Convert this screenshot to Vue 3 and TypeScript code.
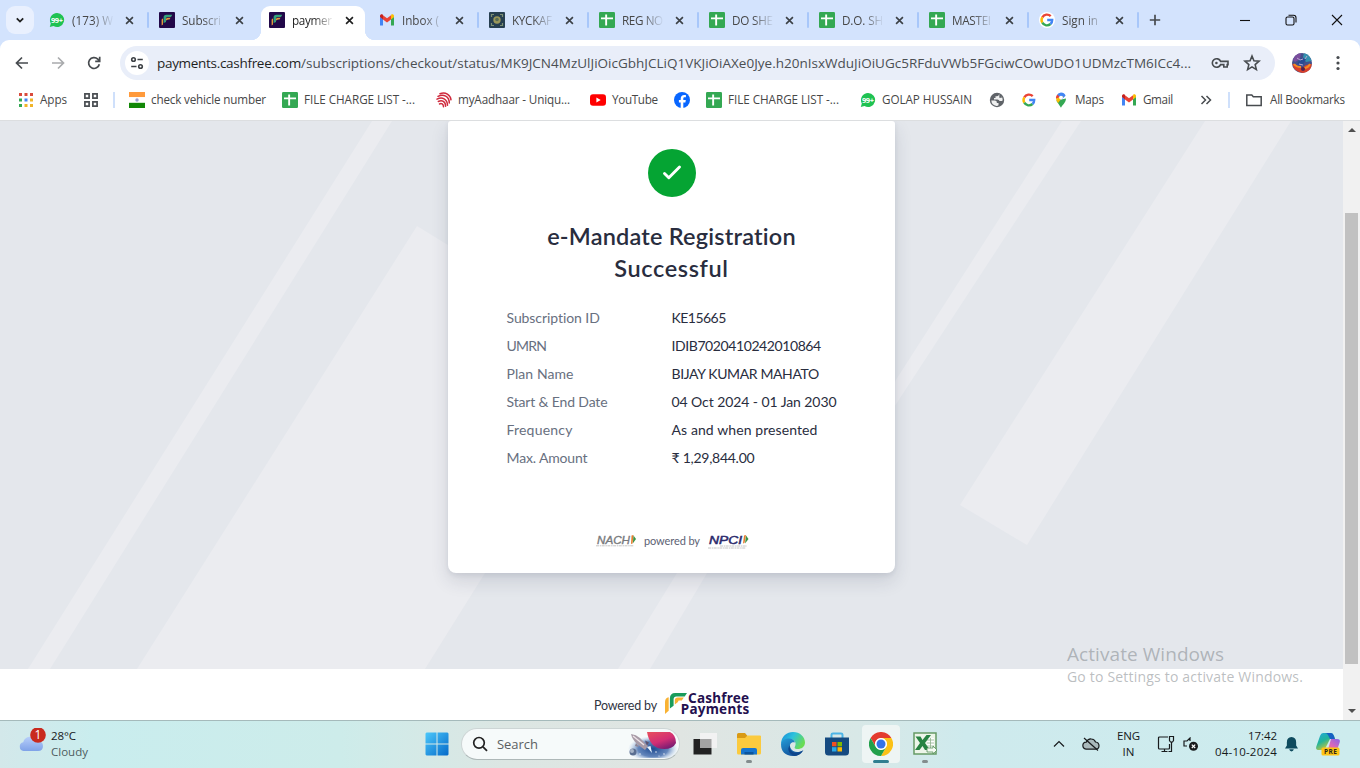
<script setup lang="ts">
import type { Directive } from 'vue'

interface Tab {
  icon: string
  title: string
  width: number
  active?: boolean
  divider?: boolean
}

interface Bookmark {
  icon: string
  label?: string
  text?: number
  box?: number
}

// Tracks a run of text so that it fills the given width in pixels.
const vFit: Directive<HTMLElement, number> = {
  mounted(el, { value }) {
    const range = document.createRange()
    range.selectNodeContents(el)
    const natural = range.getBoundingClientRect().width
    const count = (el.textContent ?? '').length
    if (count > 1) el.style.letterSpacing = `${(value - natural) / (count - 0.5)}px`
  },
}

const gmail =
  '<path fill="#4285f4" d="M1 13.500h3V7L1 4.800z"/><path fill="#34a853" d="M12 13.500h3V4.800L12 7z"/><path fill="#fbbc04" d="M12 4v3.400l3-2.300V4c0-1.500-1.700-2.200-2.700-1.400z"/><path fill="#ea4335" d="M4 7.400V3.200l4 3 4-3v4.200l-4 3z"/><path fill="#c5221f" d="M1 4v1.100l3 2.300V3.200l-.4-.6C2.700 1.900 1 2.500 1 4z"/>'
const google =
  '<path fill="none" stroke="#ea4335" stroke-width="2.400" d="M3.300 5.300A5.300 5.300 0 0 1 11.700 4.200"/><path fill="none" stroke="#fbbc05" stroke-width="2.400" d="M3.300 5.300a5.300 5.300 0 0 0 0 5.400"/><path fill="none" stroke="#34a853" stroke-width="2.400" d="M3.300 10.700a5.300 5.300 0 0 0 8.200 1.300"/><path fill="none" stroke="#4285f4" stroke-width="2.400" d="M8.200 8H13.200a5.300 5.300 0 0 1-1.700 4"/>'

const icons: Record<string, string> = {
  whatsapp:
    '<path fill="#1fc252" d="M8 1a7 7 0 1 1-3.500 13L.8 15l1-3.600A7 7 0 0 1 8 1z"/><text x="8" y="11" text-anchor="middle" font-family="Open Sans, sans-serif" font-size="7.500" font-weight="700" fill="#fff" textLength="12">99+</text>',
  cashfree:
    '<rect width="16" height="16" rx="1" fill="#220849"/><path fill="#e5983d" d="M2.600 13.500V8q0-1.200 1.400-1.600v6z"/><path fill="#35a07a" d="M4.600 11V5.500q0-2.700 2.700-2.700h6L12 5H8.500Q7 5 7 6.500V10z"/><path fill="#e5983d" d="M7 8.500V7.300q0-1.500 1.500-1.500h3l-1 1.700H9z"/>',
  gmail,
  google,
  googleTab: '<circle cx="8" cy="8" r="8" fill="#fff"/>' + google,
  kyc: '<rect width="16" height="16" rx="1" fill="#263f50"/><path fill="none" stroke="#7b8f74" stroke-width="1.200" d="M2.500 5V2.500H5M11 2.500h2.500V5M13.500 11v2.500H11M5 13.500H2.500V11"/><circle cx="8" cy="8" r="3.700" fill="#9a9759"/><circle cx="8" cy="7.500" r="1.800" fill="#566b55"/>',
  sheet:
    '<rect width="16" height="16" rx="1.200" fill="#34a853"/><path fill="#fff" d="M6.200 2.500h1.900v3h5.900v1.800H8.100V13.500H6.200V7.300H2V5.500h4.200z"/>',
  apps: '<path fill="#d94a3c" d="M1 1h3v3H1zM6.500 1h3v3h-3zM12 1h3v3h-3z"/><path fill="#34a853" d="M1 6.500h3v3H1zM1 12h3v3H1z"/><path fill="#4285f4" d="M6.500 6.500h3v3h-3z"/><path fill="#f0b429" d="M12 6.500h3v3h-3zM6.500 12h3v3h-3zM12 12h3v3h-3z"/>',
  grid: '<path fill="none" stroke="#4b4f53" stroke-width="1.700" d="M1.900 1.900h4.200v4.200H1.900zM9.900 1.900h4.200v4.200H9.900zM1.900 9.900h4.200v4.200H1.900zM9.900 9.900h4.200v4.200H9.900z"/>',
  flag: '<path fill="#ff9a3c" d="M0 0h16v5.200H0z"/><path fill="#fff" d="M0 5.200h16v5.600H0z"/><path fill="#128807" d="M0 10.800h16V16H0z"/><circle cx="8" cy="8" r="1.700" fill="#9a9fd0"/>',
  aadhaar:
    '<g fill="none" stroke="#cf2a3d" stroke-width="1.500" stroke-linecap="round"><path d="M4 1.700C9.500-.6 14.500 3 15 7.800"/><path d="M2 4.300C7.500 1.400 13.300 4.400 13.300 11"/><path d="M1 7.200c5.200-2.900 10.300-.2 10.500 6"/><path d="M2.300 9.500c3.700-2 7.400 0 7.300 4.800"/><path d="M3.500 12c2-1 3.800 0 4 2.700"/></g>',
  youtube: '<rect y="2.300" width="16" height="11.500" rx="3" fill="#f00"/><path fill="#fff" d="M6.400 5.500v5l4.300-2.500z"/>',
  facebook:
    '<circle cx="8" cy="8" r="8" fill="#0866ff"/><path fill="#fff" d="M6.700 16v-5.500H4.900V8h1.800V6.800c0-2.700 1.200-3.900 3.700-3.900.5 0 1.100.1 1.500.2v2.200h-1c-1.200 0-1.600.4-1.600 1.500V8h2.500l-.4 2.500H9.300V16z"/>',
  globe:
    '<circle cx="8" cy="8" r="7.200" fill="#5f6368"/><path fill="#fff" d="M2.300 8.500h3.500q2 0 2 1.500v1h1.700v2.300q-.8.700-2 .6-4.800-.8-5.200-5.400zM10 2.500q-.2 1.700-2 1.700H6.500v1.900H5v1.400h3.500q1.700 0 2 1.600h1.700q1.200 0 1.500-1.200-.2-4-3.700-5.400z" opacity=".9"/><path fill="#5f6368" d="M10.300 2.800h2.500v3h-2.500z"/>',
  maps: '<path fill="#34a853" d="M3.200 8.600 8 15.800c.6-2.700 5-4.800 5-9.400z"/><path fill="#4285f4" d="M8 .5a5 5 0 0 1 4.600 3.200L7.500 8.500 4 3.100A5 5 0 0 1 8 .5z"/><path fill="#ea4335" d="M4.200 2.600A5 5 0 0 0 3.200 7L7 4.900z"/><path fill="#fbbc04" d="M3.100 6.500Q3.300 9 5 10.900l5.500-6.700z"/><circle cx="8" cy="5.600" r="1.900" fill="#fff"/>',
  folder: '<path fill="none" stroke="#474b4f" stroke-width="1.500" d="M.8 3h5l1.500 1.700h7.900v8.700H.8z"/>',
}

const tabs: Tab[] = [
  { icon: 'whatsapp', title: '(173) W', width: 41, divider: true },
  { icon: 'cashfree', title: 'Subscri', width: 39 },
  { icon: 'cashfree', title: 'paymer', width: 40, active: true },
  { icon: 'gmail', title: 'Inbox (', width: 37, divider: true },
  { icon: 'kyc', title: 'KYCKAF', width: 40, divider: true },
  { icon: 'sheet', title: 'REG NO', width: 41, divider: true },
  { icon: 'sheet', title: 'DO SHE', width: 41, divider: true },
  { icon: 'sheet', title: 'D.O. SH', width: 41, divider: true },
  { icon: 'sheet', title: 'MASTEI', width: 39, divider: true },
  { icon: 'googleTab', title: 'Sign in', width: 36, divider: true },
]

const bookmarks: Bookmark[] = [
  { icon: 'flag', label: 'check vehicle number', text: 115, box: 115 },
  { icon: 'sheet', label: 'FILE CHARGE LIST -...', text: 111, box: 116 },
  { icon: 'aadhaar', label: 'myAadhaar - Uniqu...', text: 112, box: 116 },
  { icon: 'youtube', label: 'YouTube', text: 46, box: 46 },
  { icon: 'facebook' },
  { icon: 'sheet', label: 'FILE CHARGE LIST -...', text: 111, box: 116 },
  { icon: 'whatsapp', label: 'GOLAP HUSSAIN', text: 90, box: 91 },
  { icon: 'globe' },
  { icon: 'google' },
  { icon: 'maps', label: 'Maps', text: 29, box: 30 },
  { icon: 'gmail', label: 'Gmail', text: 30, box: 31 },
]

const details = [
  { label: 'Subscription ID', lw: 93.5, value: 'KE15665', vw: 54.5 },
  { label: 'UMRN', lw: 40, value: 'IDIB7020410242010864', vw: 149.5 },
  { label: 'Plan Name', lw: 67, value: 'BIJAY KUMAR MAHATO', vw: 147.5 },
  { label: 'Start & End Date', lw: 101, value: '04 Oct 2024 - 01 Jan 2030', vw: 165 },
  { label: 'Frequency', lw: 66, value: 'As and when presented', vw: 146 },
  { label: 'Max. Amount', lw: 81, value: '₹ 1,29,844.00', vw: 83 },
]
</script>

<template>
  <div class="screen">
    <header class="tabstrip">
      <button class="tab-search">
        <svg viewBox="0 0 10 10" width="10" height="10"><path d="M1.800 3.400 5 6.600 8.200 3.400" fill="none" stroke="#1f1f1f" stroke-width="1.800" /></svg>
      </button>
      <div v-for="(tab, i) in tabs" :key="i" class="tab" :class="{ active: tab.active, divider: tab.divider }">
        <svg class="icon" viewBox="0 0 16 16" v-html="icons[tab.icon]"></svg>
        <div class="tab-title"><span v-fit="tab.width">{{ tab.title }}</span></div>
        <svg class="tab-close" viewBox="0 0 10 10"><path d="M1.200 1.200 8.800 8.800M8.800 1.200 1.200 8.800" /></svg>
      </div>
      <svg class="new-tab" viewBox="0 0 12 12"><path d="M6 .8v10.400M.8 6h10.400" /></svg>
      <div class="window-buttons">
        <svg viewBox="0 0 12 12"><path d="M1 6.500h10" /></svg>
        <svg viewBox="0 0 12 12"><rect x="1" y="3" width="8" height="8" rx="1.500" /><path d="M3.500 1.200H8.500q2.500 0 2.500 2.500v4.800" /></svg>
        <svg viewBox="0 0 12 12"><path d="M1 1l10 10M11 1 1 11" /></svg>
      </div>
    </header>

    <section class="chrome">
      <div class="toolbar">
        <svg class="nav" viewBox="0 0 16 16"><path d="M14 8H2.500M8 2.500 2.500 8 8 13.500" /></svg>
        <svg class="nav dim" viewBox="0 0 16 16"><path d="M2 8h11.500M8 2.500 13.500 8 8 13.500" /></svg>
        <svg class="nav" viewBox="0 0 16 16"><path d="M13.300 9.200A5.400 5.400 0 1 1 11.800 4.200L13.500 6M13.700 1.800v4.500H9.200" /></svg>
        <div class="omnibox">
          <div class="site-info">
            <svg viewBox="0 0 14 14"><circle cx="3.500" cy="3.500" r="1.800" /><path d="M7.500 3.500h5.300M1.200 10.500h5.300" /><circle cx="10.500" cy="10.500" r="1.800" /></svg>
          </div>
          <div class="url"><span v-fit="144" class="host">payments.cashfree.com</span><span v-fit="890">/subscriptions/checkout/status/MK9JCN4MzUlJiOicGbhJCLiQ1VKJiOiAXe0Jye.h20nIsxWduJiOiUGc5RFduVWb5FGciwCOwUDO1UDMzcTM6ICc4...</span></div>
          <svg class="key" viewBox="0 0 18 12"><path d="M9.600 4.400H17v3.200h-.8V10h-3.400V7.600H9.600A4.300 4.300 0 1 1 9.600 4.400z" /><circle cx="5.400" cy="6" r="1.300" class="fill" /></svg>
          <svg class="star" viewBox="0 0 16 16"><path d="M8 1.800 9.700 6l4.600.4-3.500 3 1.100 4.500L8 11.500l-3.900 2.400 1.100-4.500-3.500-3L6.300 6z" /></svg>
        </div>
        <svg class="avatar" viewBox="0 0 20 20">
          <circle cx="10" cy="10" r="10" fill="#43508a" />
          <path d="M1 7Q3 1 9 0L8 6 3 9z" fill="#7a4d9d" /><path d="M12 .3Q18 2 19.600 8L14 9 11 4z" fill="#3391ae" />
          <path d="M.3 11Q2 10 5 13l5 2 4-3 5.800-1Q19 19 11 20 2 19 .3 11z" fill="#d8402c" />
          <path d="M2 11Q4 14 9 14M12 15q4 0 6-4" stroke="#f58a22" stroke-width="2" fill="none" />
          <path d="m5 11 4-6 5 1-3 6z" fill="#284b93" /><path d="m8 7 3-1M7 11l4 1M5 5l3 2M15 3l-2 3" stroke="#b8a8cf" stroke-width="1" />
          <circle cx="11" cy="16" r="2" fill="#51234d" />
        </svg>
        <svg class="menu" viewBox="0 0 4 16"><circle cx="2" cy="2.500" r="1.600" /><circle cx="2" cy="8" r="1.600" /><circle cx="2" cy="13.500" r="1.600" /></svg>
      </div>

      <nav class="bookmarks">
        <div class="bookmark">
          <svg class="icon" viewBox="0 0 16 16" v-html="icons.apps"></svg>
          <span class="bookmark-label"><span v-fit="27">Apps</span></span>
        </div>
        <svg class="icon" viewBox="0 0 16 16" v-html="icons.grid"></svg>
        <i class="rule"></i>
        <div v-for="(b, i) in bookmarks" :key="i" class="bookmark">
          <svg class="icon" viewBox="0 0 16 16" v-html="icons[b.icon]"></svg>
          <span v-if="b.label" class="bookmark-label" :style="{ width: b.box + 'px' }"><span v-fit="b.text ?? 0">{{ b.label }}</span></span>
        </div>
        <svg class="more" viewBox="0 0 12 10"><path d="M1.500 1 5.500 5l-4 4M6.500 1l4 4-4 4" /></svg>
        <i class="rule end"></i>
        <div class="bookmark all">
          <svg class="icon" viewBox="0 0 16 16" v-html="icons.folder"></svg>
          <span class="bookmark-label"><span v-fit="75">All Bookmarks</span></span>
        </div>
      </nav>
    </section>

    <main class="viewport">
      <div class="page">
        <div class="hero">
          <svg class="stripes" viewBox="0 0 1343 548" width="1343" height="548">
            <path d="M372 0h20L50 548H28zM417 105l65 40-57 403H137zM417 105 560 195V360L485 452 425 548H137zM677 452h30l-57 96h-32zM1062 0h19L885 300v-24zM1205 0h86L1027 424l-67-40z" />
          </svg>
          <section class="card">
            <svg class="check" viewBox="0 0 48 48"><circle cx="24" cy="24" r="24" /><path d="M16.500 24.500l4.300 4.200L31.500 18" /></svg>
            <h1><span v-fit="249">e-Mandate Registration</span><br /><span v-fit="114">Successful</span></h1>
            <dl>
              <template v-for="row in details" :key="row.label">
                <dt><span v-fit="row.lw">{{ row.label }}</span></dt>
                <dd><span v-fit="row.vw">{{ row.value }}</span></dd>
              </template>
            </dl>
            <div class="partners">
              <svg width="40" height="14" viewBox="0 0 40 14">
                <text x="1" y="9.500" textLength="33" lengthAdjust="spacingAndGlyphs" class="mark grey">NACH</text>
                <path d="M35.500 1.500 37.500 1 36.500 9.500 35 10z" fill="#e77b2e" /><path d="M37.500 1.500 40 5 36.800 9.500z" fill="#3d9448" />
                <path d="M0 11.800h38" class="tiny" />
              </svg>
              <span v-fit="56">powered by</span>
              <svg width="42" height="16" viewBox="0 0 42 16">
                <text x="1" y="11" textLength="33" lengthAdjust="spacingAndGlyphs" class="mark navy">NPCI</text>
                <path d="M36 2.500 38 2 36.500 10 35 10.500z" fill="#e77b2e" /><path d="M38 2.500 40.500 6 37 10.500z" fill="#3d9448" />
                <path d="M12 13h27M0 15h38" class="tiny" />
              </svg>
            </div>
          </section>
        </div>
        <footer class="footer">
          <span v-fit="63">Powered by</span>
          <svg width="86" height="28" viewBox="0 0 86 28">
            <path d="M0 24V12Q0 8 3.700 7.200V20.700z" fill="#f9b233" />
            <path d="M4.900 18.500V8.500Q4.900 3 10.300 3H22l-2.300 3.400h-8.200Q8.600 6.400 8.600 9.300v6.500z" fill="#1a9c5b" />
            <path d="M9.800 14.500V10.500Q9.800 7.600 12.800 7.600h6l-2 3h-2.500q-1.300 0-1.300 1.300z" fill="#f9b233" />
            <text x="23" y="12.700" textLength="61">Cashfree</text>
            <text x="15.800" y="24" textLength="68.500">Payments</text>
          </svg>
        </footer>
      </div>
      <aside class="scrollbar">
        <svg viewBox="0 0 8 4"><path d="M0 4 4 0l4 4z" /></svg>
        <div class="thumb"></div>
        <svg viewBox="0 0 8 4"><path d="M0 0h8L4 4z" /></svg>
      </aside>
    </main>

    <div class="watermark">
      <div class="big"><span v-fit="157">Activate Windows</span></div>
      <div class="small"><span v-fit="236">Go to Settings to activate Windows.</span></div>
    </div>

    <footer class="taskbar">
      <div class="weather">
        <svg width="28" height="32" viewBox="0 0 28 32">
          <defs><linearGradient id="cloud" x2="0" y2="1"><stop stop-color="#b8cffa" /><stop offset="1" stop-color="#7fa2e8" /></linearGradient></defs>
          <path d="M5.500 23a4.500 4.500 0 0 1-.3-8.800A7.500 7.500 0 0 1 19 12.500q6 .5 6 5.500 0 5-5 5z" fill="url(#cloud)" />
          <circle cx="20" cy="7" r="7.800" fill="#c92a1e" />
          <text x="20" y="11" text-anchor="middle" fill="#fff" font-size="12">1</text>
        </svg>
        <div class="weather-text"><div><span v-fit="25">28°C</span></div><div class="soft"><span v-fit="37">Cloudy</span></div></div>
      </div>

      <div class="pinned">
        <svg class="start" viewBox="0 0 24 24">
          <defs><linearGradient id="win" x2="1" y2="1"><stop stop-color="#4cc8fb" /><stop offset="1" stop-color="#0469c9" /></linearGradient></defs>
          <path fill="url(#win)" d="M1.500.5h10v11H.5v-10zM12.500.5h10l1 1v10h-11zM.5 12.500h11v11h-10l-1-1zM12.500 12.500h11v10l-1 1h-10z" />
        </svg>
        <div class="search">
          <svg class="lens" viewBox="0 0 16 16"><circle cx="7" cy="6.800" r="5.300" /><path d="m11 10.800 4 4" /></svg>
          <span v-fit="41">Search</span>
          <svg class="space" viewBox="0 0 52 27">
            <defs>
              <radialGradient id="sky"><stop stop-color="#1d4a91" /><stop offset=".6" stop-color="#4a72b0" stop-opacity=".85" /><stop offset="1" stop-color="#adc8ea" stop-opacity="0" /></radialGradient>
              <linearGradient id="planet" x2=".6" y2="1"><stop stop-color="#e8505c" /><stop offset=".6" stop-color="#d22e75" /><stop offset="1" stop-color="#7d1d72" /></linearGradient>
            </defs>
            <ellipse cx="25" cy="18" rx="25" ry="13" fill="url(#sky)" />
            <path d="M19 1h23q6 3 6 11-3 6-12 6Q22 18 19 1z" fill="url(#planet)" />
            <path d="M3 3q5 .5 9 4l8 8-3 4-8-6Q4 8 3 3z" fill="#a89ba7" /><path d="m5 5 11 9" stroke="#eee4e8" stroke-width="1.300" /><path d="m8 12-1 3 4 1z" fill="#8e8493" /><path d="m17 9.500 4 2-2 3z" fill="#5e526c" /><path d="m19 16 5 6-1.500-7z" fill="#eaf6ff" />
            <circle cx="5" cy="21" r="3.500" fill="#5b6f91" /><circle cx="4" cy="20" r="2" fill="#a8b5c8" />
            <g fill="#fff"><circle cx="12" cy="23" r=".7" /><circle cx="28" cy="21" r=".7" /><circle cx="36" cy="23" r=".7" /><circle cx="31" cy="25" r=".5" /></g>
          </svg>
        </div>
        <div class="slot">
          <svg viewBox="0 0 24 24"><path d="M.5 7h18v15.500H.5z" fill="#222" /><path d="M7 1h17v15H7z" fill="#f2f2f2" /><path d="M7 7h11.500v9H7z" fill="#a3a3a3" /></svg>
        </div>
        <div class="slot running">
          <svg viewBox="0 0 24 24"><path d="M0 2.500Q0 1 1.500 1H8l2.500 3H23q1 0 1 1v4H0z" fill="#d99a15" /><path d="M0 6h8l2.500-2.500H23q1 0 1 1V21q0 1.500-1.500 1.500h-21Q0 22.500 0 21z" fill="#fbca3e" /><path d="M4 22.500V18q0-2 2-2h12q2 0 2 2v4.500z" fill="#1675cf" /><path d="M7.500 22.500V20h9v2.500z" fill="#0b559e" /></svg>
        </div>
        <div class="slot">
          <svg viewBox="0 0 24 24">
            <defs>
              <linearGradient id="edgeTop" x2="1" y2=".5"><stop stop-color="#1688d8" /><stop offset=".5" stop-color="#2dc2dd" /><stop offset="1" stop-color="#69dc54" /></linearGradient>
              <linearGradient id="edgeLow" x2=".6" y2="1"><stop stop-color="#259dd8" /><stop offset="1" stop-color="#114d98" /></linearGradient>
            </defs>
            <path d="M0 12C.3 4 6 0 12 0c7 0 12 5 12 10.500C24 15 20 17 17 17c-4 0-3.500-1.500-3-2.500 2-4-1-7.500-5-7.500-5 0-8 3-9 5z" fill="url(#edgeTop)" />
            <path d="M0 12C1 8 4 6.500 8 6.500c3 0 5.500 1.500 6 4-4-1-6 2-4.500 5.500 2 4.500 8 5.500 13 2Q19 24 12 24 0 23.500 0 12z" fill="url(#edgeLow)" />
            <path d="M9 13.500C7.500 19 14 24 22 18.500 20 22 17 23.800 13.500 24 8 22 5.500 17 9 13.500z" fill="#0e458b" />
          </svg>
        </div>
        <div class="slot">
          <svg viewBox="0 0 24 24"><path d="M6.500 6.500V2.800Q6.500 1.500 8 1.500h8q1.500 0 1.500 1.300v3.700" fill="none" stroke="#4cb4e6" stroke-width="2" /><path d="M0 5.500h24V20q0 3.500-3.500 3.500h-17Q0 23.500 0 20z" fill="#154a80" /><path d="M7 10h4.500v4.300H7z" fill="#f25022" /><path d="M12.500 10H17v4.300h-4.500z" fill="#7fba00" /><path d="M7 15.200h4.500v4.300H7z" fill="#29a9e8" /><path d="M12.500 15.200H17v4.300h-4.500z" fill="#ffb900" /></svg>
        </div>
        <div class="slot current">
          <svg viewBox="0 0 24 24"><circle cx="12" cy="12" r="12" fill="#fff" /><path d="M1.600 6A12 12 0 0 1 22.400 6H12A6 6 0 0 0 6.800 15z" fill="#e33b2e" /><path d="M22.400 6A12 12 0 0 1 12 24l5.200-9A6 6 0 0 0 12 6z" fill="#fbc116" /><path d="M1.600 6A12 12 0 0 0 12 24l5.200-9A6 6 0 0 1 6.800 15z" fill="#22a04b" /><circle cx="12" cy="12" r="5.800" fill="#fff" /><circle cx="12" cy="12" r="4.500" fill="#3473e8" /></svg>
        </div>
        <div class="slot running">
          <svg viewBox="0 0 24 24"><path d="M1 1h22v21H1z" fill="#edf5e9" stroke="#669b65" stroke-width="1.500" /><path d="M14 6h7v14h-7z" fill="#fff" /><path d="M14 8h7M14 11h7M14 14h7M14 17h7M17.500 6v14" stroke="#91b38d" stroke-width=".8" /><path d="M2.500 4.500h5l2 3.500 4-5H18l-6 8 5 7h-5l-2.500-4-3 4H2l5-7z" fill="#278342" /><path d="M14 16h6v-2l4 4-4 4v-2h-6z" fill="#f5faf3" stroke="#579158" stroke-width=".8" /></svg>
        </div>
      </div>

      <div class="tray">
        <svg class="chevron" viewBox="0 0 12 8"><path d="m1 6.500 5-5 5 5" /></svg>
        <svg class="cloud-off" viewBox="0 0 18 14"><path d="M4.500 12.200a3.500 3.500 0 0 1-.3-7Q6 1.500 9.500 2q3 .3 4 3 3.500.5 3.500 3.700 0 3.500-3.500 3.500z" fill="#aab9bb" /><path d="m2 1 14 12.500" /></svg>
        <div class="lang"><div><span v-fit="23">ENG</span></div><div><span v-fit="12">IN</span></div></div>
        <svg class="network" viewBox="0 0 18 18"><path d="M11 2H2.500Q1.500 2 1.500 3v10q0 1 1 1h9q1 0 1-1V9M4.500 16.500h6M7.500 14v2.500" /><path d="M12.500 1.500h4v4l-1 1.500h-2l-1-1.500zM14.500 7v9.500h-3" /></svg>
        <svg class="sound" viewBox="0 0 16 14"><path d="M7 4V1L4 4H1v5h3" /><circle cx="10.500" cy="9.300" r="4.500" class="disc" /><path d="m8.800 7.600 3.400 3.400m0-3.400-3.400 3.400" class="cross" /></svg>
        <div class="clock"><div><span v-fit="29">17:42</span></div><div><span v-fit="62">04-10-2024</span></div></div>
        <svg class="bell" viewBox="0 0 14 16"><path d="M7 0q5 .3 5 5.500V9l2 3.300H0L2 9V5.500Q2 .3 7 0zM4.500 13.200h5Q9 15.500 7 15.500t-2.500-2.300z" fill="#0f4b5e" /></svg>
        <svg class="copilot" viewBox="0 0 24 24">
          <defs>
            <linearGradient id="copA" x2=".6" y2="1"><stop stop-color="#24a7df" /><stop offset=".5" stop-color="#22b49a" /><stop offset="1" stop-color="#e7c928" /></linearGradient>
            <linearGradient id="copB" x1="1" x2="0" y2="1"><stop stop-color="#8664ea" /><stop offset=".6" stop-color="#e068b5" /><stop offset="1" stop-color="#fb9461" /></linearGradient>
          </defs>
          <path d="M7 1h8q2 0 3 3l1 3h-5l-4 8q-1 3-4 3H3q-4 0-2.500-4L4 4q1-3 3-3z" fill="url(#copA)" />
          <path d="M9 1h6q2 0 3 3l1 3h-5l-2-4q-1-2-3-2z" fill="#1761c3" />
          <path d="M15 7h6q4 0 2.500 4L21 18H9q3 0 4-4z" fill="url(#copB)" />
          <rect x="5.500" y="15.500" width="18" height="8" rx="1.500" fill="#ffc414" />
          <text x="14.500" y="22" text-anchor="middle" font-size="6.500" font-weight="700" textLength="13">PRE</text>
        </svg>
      </div>
    </footer>
  </div>
</template>

<style>
body { margin: 0; overflow: hidden; }
</style>

<style scoped>
* { box-sizing: border-box; }
.screen { position: relative; display: flex; flex-direction: column; width: 1360px; height: 768px; overflow: hidden; background: #d3e3fd; font: 12px/16px "Open Sans", "Noto Sans", sans-serif; color: #474747; white-space: nowrap; }
svg { display: block; flex: none; }
.icon { width: 16px; height: 16px; }

.tabstrip { display: flex; align-items: center; height: 40px; padding-left: 6px; }
.tab-search { display: grid; place-items: center; width: 28px; height: 28px; margin: 0 5px 0 0; padding: 0; border: 0; border-radius: 9px; background: #e9f0fe; }
.tab { position: relative; display: flex; align-items: center; width: 110px; height: 40px; padding-left: 10px; font-size: 11.700px; }
.tab > * { position: relative; }
.tab-title { width: 42px; margin: -1px 0 0 7px; overflow: hidden; -webkit-mask-image: linear-gradient(90deg, #000 50%, transparent 100%); mask-image: linear-gradient(90deg, #000 50%, transparent 100%); }
.tab-close { width: 9px; height: 9px; margin-left: 10.500px; fill: none; stroke: #3c4146; stroke-width: 1.800; }
.tab.divider::after { content: ""; position: absolute; left: 108px; top: 12px; width: 2px; height: 16px; background: #a8c7fa; border-radius: 1px; }
.tab.active::before { content: ""; position: absolute; left: 2px; top: 6px; width: 104px; height: 34px; border-radius: 9px 9px 0 0; background: #fff; }
.tab.active::after { content: ""; position: absolute; left: -8px; top: 30px; width: 124px; height: 10px; background: radial-gradient(circle at 0 0, transparent 10px, #fff 10.500px) left / 10px 10px no-repeat, radial-gradient(circle at 100% 0, transparent 10px, #fff 10.500px) right / 10px 10px no-repeat; }
.tab.active { color: #1f1f1f; }
.tab.active .tab-close { stroke: #1f1f1f; }
.new-tab { width: 12px; height: 12px; margin-left: 10px; fill: none; stroke: #474b4f; stroke-width: 1.700; }
.window-buttons { display: flex; gap: 34px; margin-left: auto; padding-right: 17px; }
.window-buttons svg { width: 12px; height: 12px; fill: none; stroke: #111; stroke-width: 1.100; }

.chrome { height: 81px; border-radius: 9px 9px 0 0; background: #fff; border-bottom: 1px solid #dcdee0; }
.toolbar { display: flex; align-items: center; height: 46px; padding-left: 14px; }
.nav { width: 16px; height: 16px; margin-right: 20px; fill: none; stroke: #474b4f; stroke-width: 1.700; }
.nav.dim { stroke: #a9abad; }
.omnibox { display: flex; align-items: center; width: 1155px; height: 34px; margin-left: -2px; padding-left: 5px; border-radius: 17px; background: #e9eef9; }
.site-info { display: grid; place-items: center; width: 24px; height: 24px; border-radius: 50%; background: #fff; }
.site-info svg { width: 14px; height: 14px; fill: none; stroke: #3d4145; stroke-width: 1.600; }
.url { display: flex; width: 1053px; margin-left: 8px; font-size: 13.500px; line-height: 20px; color: #4b4f53; }
.host { width: 144px; color: #1f1f1f; }
.key { width: 18px; height: 12px; margin-left: 1px; fill: none; stroke: #474b4f; stroke-width: 1.600; }
.key .fill { fill: #474b4f; stroke: none; }
.star { width: 18px; height: 18px; margin-left: 14px; fill: none; stroke: #474b4f; stroke-width: 1.400; }
.avatar { width: 20px; height: 20px; margin-left: 17px; }
.menu { width: 4px; height: 16px; margin-left: 24px; fill: #474b4f; }

.bookmarks { display: flex; align-items: center; gap: 16px; height: 28px; padding-left: 18px; font-size: 11.700px; }
.bookmark { display: flex; gap: 6px; height: 16px; }
.bookmark-label { margin-top: -1px; }
.rule { width: 2px; height: 16px; margin: 0 -2px 0 -2px; background: #cfe0fb; }
.more { width: 12px; height: 10px; margin-left: 10px; fill: none; stroke: #474b4f; stroke-width: 1.500; }
.rule.end { margin: 0; }
.bookmark.all { gap: 8px; }

.viewport { display: flex; height: 599px; background: #fff; }
.page { width: 1343px; height: 599px; overflow: hidden; }
.hero { position: relative; height: 548px; background: #e4e7ec; }
.stripes { position: absolute; left: 0; top: 0; fill: #ebecf0; }
.card { position: relative; width: 447px; height: 452px; margin: 0 auto 0 448px; padding-top: 28px; border-radius: 3px 3px 8px 8px; background: #fff; box-shadow: 0 8px 18px rgba(40, 50, 75, .14), 0 2px 5px rgba(40, 50, 75, .08); font-family: Lato, sans-serif; }
.check { width: 48px; height: 48px; margin: 0 auto; fill: #05a433; }
.check path { fill: none; stroke: #fff; stroke-width: 2.900; stroke-linecap: round; stroke-linejoin: round; }
h1 { margin: 23px 0 0; font-size: 23.500px; line-height: 32px; font-weight: 600; text-align: center; color: #292d3e; }
dl { display: grid; grid-template-columns: 165px auto; grid-auto-rows: 28px; margin: 20px 0 0 58.500px; font-size: 14px; line-height: 28px; }
dt { color: #687080; }
dd { margin: 0; color: #292d3e; }
.partners { display: flex; align-items: center; margin: 61px 0 0 148px; font-size: 11px; color: #5c6173; }
.partners span { width: 56px; margin: 0 8px; line-height: 16px; }
.mark { font: italic 400 11px "Liberation Sans", sans-serif; stroke-width: .35; }
.grey { fill: #77797c; stroke: #77797c; }
.navy { fill: #2b2a6c; stroke: #2b2a6c; stroke-width: .5; }
.tiny { fill: none; stroke: #c4c4c4; stroke-width: 1; stroke-dasharray: 3 .7 1.500 .5; }
.footer { display: flex; height: 51px; padding: 21px 0 0 594px; font: 12.500px/32px Lato, sans-serif; color: #30343f; }
.footer span { width: 63px; }
.footer svg { margin-left: 8px; }
.footer text { font: 700 13.500px "Noto Sans", sans-serif; fill: #24104f; }
.scrollbar { display: flex; flex-direction: column; align-items: center; width: 17px; padding: 7px 0; background: #f1f1f1; fill: #505050; }
.scrollbar svg { width: 8px; height: 4px; }
.thumb { width: 13px; height: 451px; margin: 81px 0 45px; background: #c1c1c1; }

.watermark { position: absolute; left: 1067px; top: 642px; color: rgba(130, 135, 140, .55); }
.big { font-size: 19px; line-height: 24px; }
.small { font-size: 14px; line-height: 22px; }

.taskbar { display: flex; align-items: center; height: 48px; padding-bottom: 1px; border-top: 1px solid #a5babb; background: linear-gradient(90deg, #d3e8ea 0, #c9edee 7%, #cdecea 25%, #dce6e3 37%, #e0e5e2 50%, #d8e8e7 63%, #ceeaed 71%, #cdecee 100%); color: #16191b; }
.weather { display: flex; width: 425px; padding-left: 18px; gap: 5px; font-size: 11.500px; }
.soft { color: #4e5c5e; }
.pinned { display: flex; align-items: center; height: 46px; }
.start { width: 24px; height: 24px; }
.search { display: flex; align-items: center; width: 219px; height: 32px; margin: 0 6px 0 12px; padding-left: 10px; border: 1px solid #cdd5d5; border-bottom-color: #aeb8b8; border-radius: 16px; background: #f6fafa; color: #5b6062; font-size: 13px; overflow: hidden; }
.search span { width: 41px; }
.lens { width: 16px; height: 16px; margin-right: 9px; fill: none; stroke: #222; stroke-width: 1.700; }
.space { width: 52px; height: 27px; margin-left: 90px; }
.slot { position: relative; display: grid; place-items: center; width: 38px; height: 38px; margin-right: 6px; border-radius: 4px; }
.slot svg { width: 24px; height: 24px; }
.slot.running::after, .slot.current::after { content: ""; position: absolute; bottom: 0; width: 6px; height: 3px; border-radius: 2px; background: #838c8d; }
.slot.current { background: #eef5f4; }
.slot.current::after { width: 16px; background: #2f7f90; }
.tray { display: flex; align-items: center; margin-left: auto; padding-right: 20px; font-size: 11.500px; fill: none; stroke: #181b1d; stroke-width: 1.200; }
.tray text { stroke: none; fill: #2a2418; }
.chevron { width: 12px; height: 8px; margin-right: 17px; }
.cloud-off { width: 18px; height: 14px; margin-right: 16px; }
.lang { width: 25px; margin-right: 16px; text-align: center; }
.network { width: 18px; height: 18px; margin-right: 8px; }
.sound { width: 16px; height: 14px; margin-right: 15px; }
.disc { fill: #181b1d; stroke: none; }
.cross { stroke: #fff; }
.clock { width: 63px; margin-right: 8px; text-align: right; }
.bell { width: 13px; height: 15px; margin-right: 18px; stroke: none; }
.copilot { width: 24px; height: 24px; stroke: none; }
</style>
